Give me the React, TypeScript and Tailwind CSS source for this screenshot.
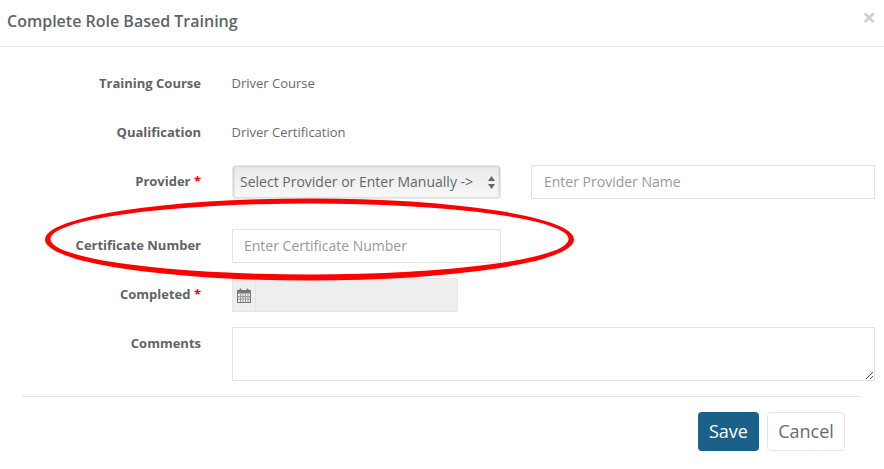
import React from "react";

function Label({ text, required }: { text: string; required?: boolean }) {
  return (
    <label className="w-[201px] shrink-0 pt-[7px] text-right text-[13px] leading-[18px] font-bold text-[#5f6468]">
      {text}
      {required && <span className="text-[#ff0000]"> *</span>}
    </label>
  );
}

function CalendarIcon() {
  return (
    <svg width="14" height="15" viewBox="0 0 14 15" fill="none">
      <rect x="0.5" y="2.5" width="13" height="12" fill="#efefef" stroke="#777" />
      <rect x="1" y="3" width="12" height="2.5" fill="#777" />
      <path d="M3.5 6v8M6 6v8M8.5 6v8M11 6v8M1 8.5h12M1 11h12" stroke="#999" strokeWidth="1" />
      <rect x="2.5" y="0.5" width="2" height="3.5" rx="1" fill="#777" />
      <rect x="9.5" y="0.5" width="2" height="3.5" rx="1" fill="#777" />
    </svg>
  );
}

export default function App() {
  return (
    <div className="relative h-[469px] w-[884px] overflow-hidden bg-white font-['Open_Sans',sans-serif]">
      <div className="flex h-[47px] items-start justify-between border-b border-[#e5e5e5] pl-[7px] pr-[8px]">
        <h4 className="pt-[10px] text-[16px] leading-[22px] font-semibold text-[#5f6468]">
          Complete Role Based Training
        </h4>
        <span className="pt-[3px] text-[24px] leading-[28px] font-bold text-[#cfcfcf]">×</span>
      </div>

      <div className="pt-[20px]">
        <div className="mb-[15px] flex h-[34px]">
          <Label text="Training Course" />
          <div className="pl-[30.5px] pt-[7px] text-[13px] leading-[18px] text-[#666b6f]">Driver Course</div>
        </div>
        <div className="mb-[15px] flex h-[34px]">
          <Label text="Qualification" />
          <div className="pl-[30.5px] pt-[7px] text-[13px] leading-[18px] text-[#666b6f]">Driver Certification</div>
        </div>
        <div className="mb-[30px] flex h-[34px]">
          <Label text="Provider" required />
          <div className="ml-[31px] flex h-[34px] w-[269px] items-center justify-between rounded-[4px] border border-[#e8e8e8] bg-gradient-to-b from-[#e9e9e9] to-[#f8f8f8] pl-[7px] pr-[5px] shadow-[inset_1px_0_2px_rgba(0,0,0,0.15),inset_-1px_0_2px_rgba(0,0,0,0.15)]">
            <span className="text-[14px] leading-[20px] text-[#63676b]">Select Provider or Enter Manually -&gt;</span>
            <svg width="7" height="13" viewBox="0 0 7 13" fill="#666">
              <path d="M3.5 0L7 5H0zM3.5 13L0 8h7z" />
            </svg>
          </div>
          <div className="ml-[30px] flex h-[34px] w-[344px] items-center border border-[#e3e3e3] pl-[12px] text-[14px] leading-[20px] text-[#999]">
            Enter Provider Name
          </div>
        </div>
        <div className="mb-[15px] flex h-[34px]">
          <Label text="Certificate Number" />
          <div className="ml-[31px] flex h-[34px] w-[269px] items-center border border-[#e3e3e3] pl-[11px] text-[14px] leading-[20px] text-[#999]">
            Enter Certificate Number
          </div>
        </div>
        <div className="mb-[15px] flex h-[34px]">
          <Label text="Completed" required />
          <div className="ml-[31px] flex h-[34px] w-[226px] rounded-r-[2px] border border-[#e6e6e6] bg-[#eeeeee]">
            <div className="flex w-[23px] items-center justify-center border-r border-[#e3e3e3]">
              <CalendarIcon />
            </div>
          </div>
        </div>
        <div className="flex h-[54px]">
          <Label text="Comments" />
          <div className="relative ml-[31px] h-[54px] w-[643px] border border-[#e3e3e3]">
            <svg className="absolute bottom-[1px] right-[1px]" width="8" height="8" viewBox="0 0 8 8" stroke="#555" strokeWidth="1">
              <path d="M1 8L8 1M5 8L8 5" />
            </svg>
          </div>
        </div>
      </div>

      <div className="mx-[22px] mt-[15px] w-[838px] border-t border-[#e5e5e5]" />

      <div className="mt-[15px] flex justify-end gap-[8px] pr-[39px]">
        <button className="h-[39px] w-[61px] rounded-[4px] bg-[#1b6089] pb-[2px] text-[18px] leading-[24px] text-white">Save</button>
        <button className="h-[39px] w-[78px] rounded-[4px] border border-[#e6e6e6] pb-[2px] text-[18px] leading-[24px] text-[#666b6f]">Cancel</button>
      </div>

      <svg className="pointer-events-none absolute left-0 top-0" width="884" height="469" viewBox="0 0 884 469">
        {/* hand drawn look: ring is a bit heavier along the bottom */}
        <path
          fillRule="evenodd"
          fill="#ff0000"
          d="M45 239.5a264.5 41 0 1 0 529 0a264.5 41 0 1 0 -529 0zM50.5 239a259 35.5 0 1 0 518 0a259 35.5 0 1 0 -518 0z"
        />
      </svg>
    </div>
  );
}
